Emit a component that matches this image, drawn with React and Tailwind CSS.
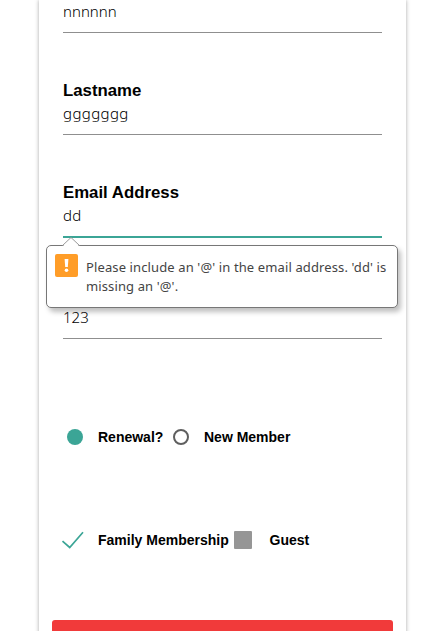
const inputFont = "font-['Noto_Sans','Open_Sans',sans-serif]";

function Field({ label, value, className = "h-[102px]", valueClass = "", focused = false, children }) {
  return (
    <div
      className={`relative flex flex-col justify-end ${className} ${
        focused ? "border-b-2 border-[#3ba596]" : "border-b border-[#8f8f8f]"
      }`}
    >
      {label && <label className="text-[16.8px] font-bold leading-5">{label}</label>}
      <div className={`${inputFont} pb-[10px] pt-px text-[15px] font-light leading-[22px] text-black`}>
        <span className={valueClass}>{value}</span>
      </div>
      {children}
    </div>
  );
}

function ValidationBubble() {
  return (
    <div className="absolute -left-[17px] top-[110px] z-10 flex h-[63px] w-[352px] rounded-[5px] border border-[#777] bg-white pl-2 pt-2 shadow-[3px_4px_5px_rgba(0,0,0,0.25)]">
      <svg className="absolute left-[15px] -top-[9px]" width="18" height="10" viewBox="0 0 18 10">
        <path d="M1 9 L9 1 L17 9 V10 H1 Z" fill="#fff" />
        <path d="M0.5 8.5 L9 0.5 L17.5 8.5" fill="none" stroke="#999" strokeWidth="1" />
      </svg>
      <svg className="shrink-0" width="23" height="23" viewBox="0 0 23 23">
        <rect width="23" height="23" rx="2" fill="#ff9d28" />
        <path d="M9.6 5 H13.4 L12.8 13 H10.2 Z" fill="#fff" />
        <circle cx="11.5" cy="16.2" r="1.8" fill="#fff" />
      </svg>
      <p className={`${inputFont} ml-2 mt-1 whitespace-nowrap text-[13px] leading-[19px] tracking-[0.12px] text-[#444]`}>
        <span className="block">Please include an '@' in the email address. 'dd' is</span>
        <span className="block">missing an '@'.</span>
      </p>
    </div>
  );
}

export default function App() {
  return (
    <main className="flow-root h-[631px] overflow-hidden bg-white font-['Liberation_Sans',Arial,sans-serif] text-black">
      <div className="ml-[39px] flow-root h-[640px] w-[367px] bg-white shadow-[0_0_4px_rgba(0,0,0,0.35)]">
        <form className="-mt-[69px] px-6">
          <Field value="nnnnnn" />
          <Field label="Lastname" value="ggggggg" valueClass="tracking-[0.4px]" />
          <Field label="Email Address" value="dd" valueClass="tracking-[0.3px]" className="h-[103px]" focused>
            <ValidationBubble />
          </Field>
          <Field value="123" className="h-[101px]" />
          <div className="mt-[88px] flex h-5 items-center text-sm font-bold">
            <span className="ml-1 size-4 rounded-full bg-[#3ba596]" />
            <span className="ml-[15px] w-[75px]">Renewal?</span>
            <span className="size-4 rounded-full border-2 border-[#5f5f5f]" />
            <span className="ml-[15px]">New Member</span>
          </div>
          <div className="mt-[83px] flex h-5 items-center text-sm font-bold">
            <svg className="-ml-[2px]" width="24" height="20" viewBox="0 0 24 20">
              <path d="M1.5 11.2 L8.7 17.5 L22 2.3" fill="none" stroke="#3ba596" strokeWidth="1.7" />
            </svg>
            <span className="ml-[13px] w-[136px]">Family Membership</span>
            <span className="size-[18px] rounded-[1px] bg-[#969696]" />
            <span className="ml-[17.5px]">Guest</span>
          </div>
        </form>
        <div className="mx-[13px] mt-[70px] h-10 rounded-[3px] bg-[#f13a3a]" />
      </div>
    </main>
  );
}
